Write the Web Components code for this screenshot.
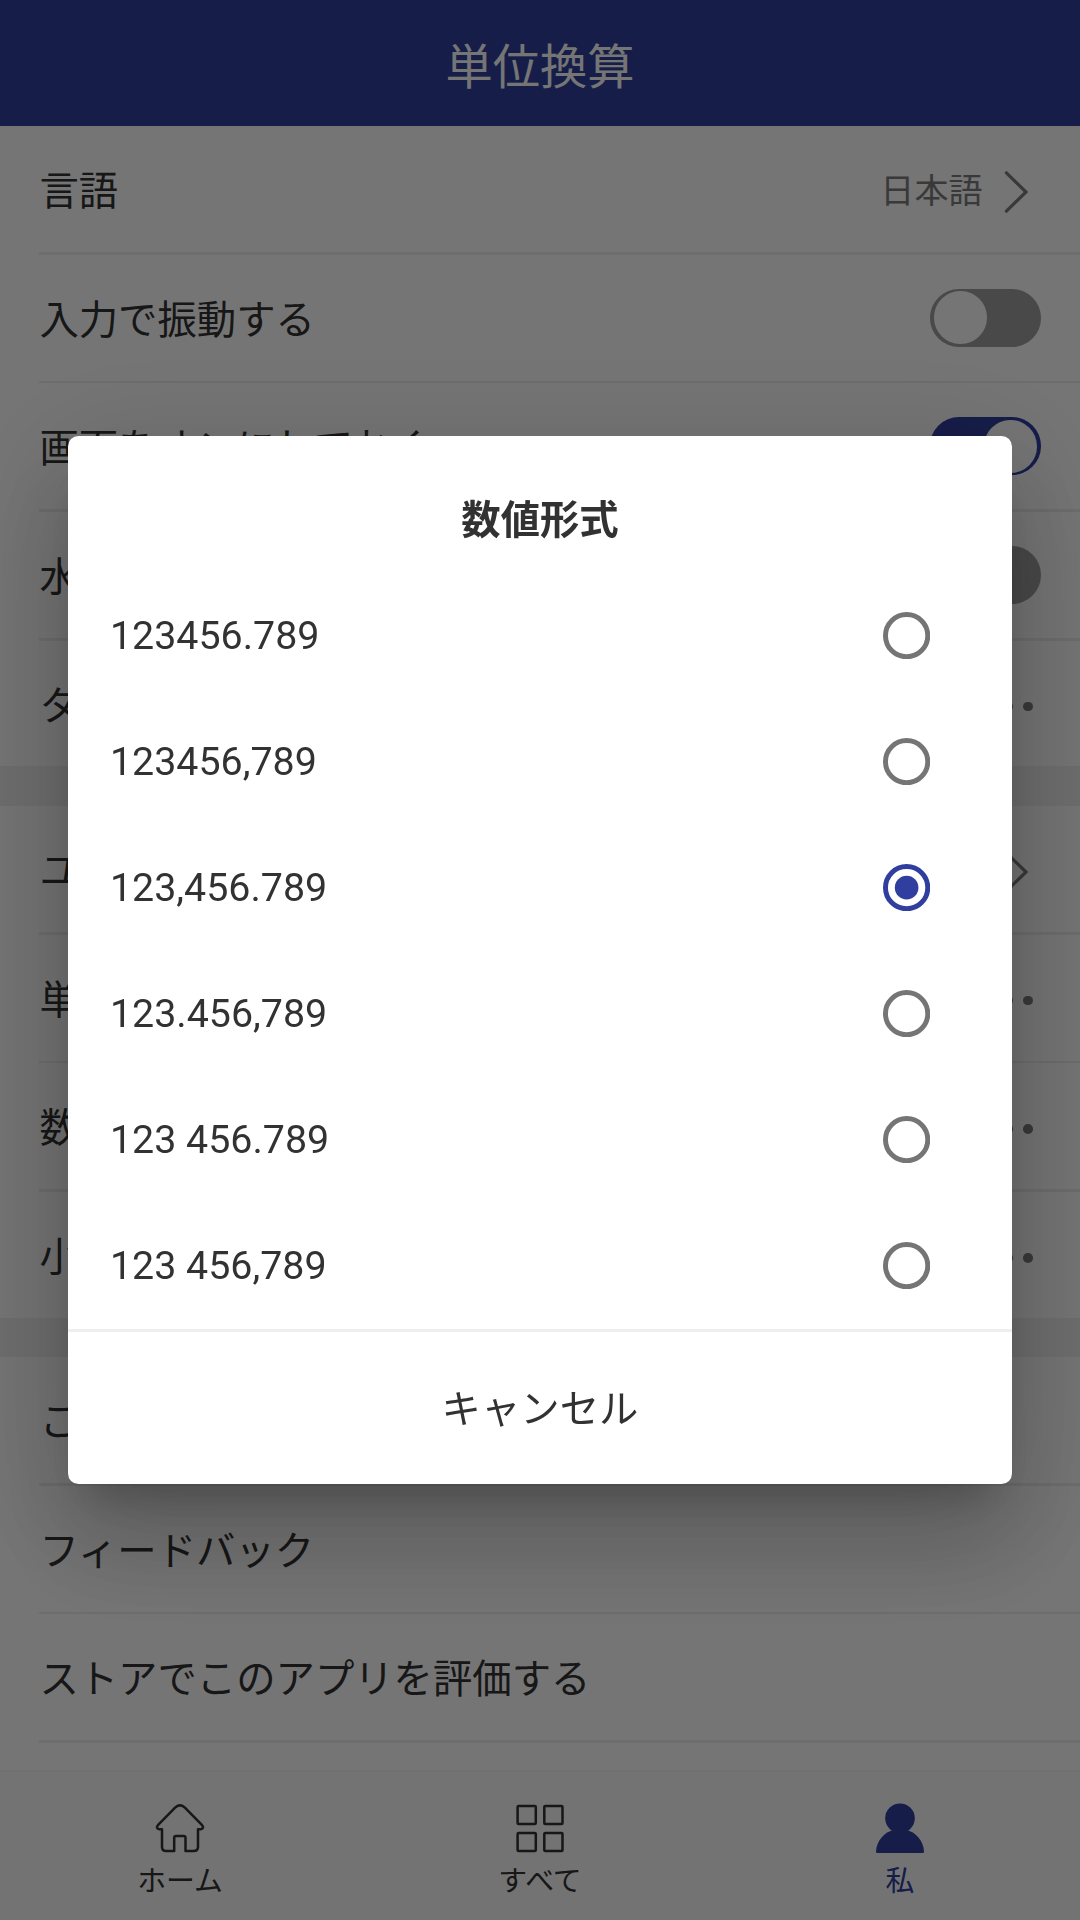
<!DOCTYPE html>
<html lang="ja">
<head>
<meta charset="utf-8">
<title>単位換算</title>
<style>
html, body { margin: 0; height: 100%; }
body {
  --u: 2.625px;
  --primary: #303f9f;
  --text: #323232;
  font-family: Roboto, "Noto Sans CJK JP", sans-serif;
  font-size: calc(var(--u) * 15);
  color: var(--text);
  overflow: hidden;
}
</style>
</head>
<body>
<app-shell>
  <app-header slot="header">単位換算</app-header>
  <settings-group compact>
    <settings-row label="言語"><span>日本語</span><chevron-icon></chevron-icon></settings-row>
    <settings-row label="入力で振動する"><toggle-switch></toggle-switch></settings-row>
    <settings-row label="画面をオンにしておく"><toggle-switch on></toggle-switch></settings-row>
    <settings-row label="水"><toggle-switch></toggle-switch></settings-row>
    <settings-row label="タ" last><more-icon></more-icon></settings-row>
  </settings-group>
  <settings-group>
    <settings-row label="ユ"><chevron-icon></chevron-icon></settings-row>
    <settings-row label="単"><more-icon></more-icon></settings-row>
    <settings-row label="数"><more-icon></more-icon></settings-row>
    <settings-row label="小" last><more-icon></more-icon></settings-row>
  </settings-group>
  <settings-group>
    <settings-row label="こ"></settings-row>
    <settings-row label="フィードバック"></settings-row>
    <settings-row label="ストアでこのアプリを評価する"></settings-row>
  </settings-group>
  <tab-bar slot="footer">
    <tab-item label="ホーム">
      <svg width="50" height="52" viewBox="0 0 50 52" fill="none" stroke="currentColor" stroke-width="2.5" stroke-linejoin="round" stroke-linecap="round"><path d="M20.6 5.2 2.9 23.2C1.2 25.2 2 27.2 4.2 27.2H7V45Q7 49 11 49H19.2V35.8Q19.2 34 21 34H28.7Q30.5 34 30.5 35.8V49H38.5Q43 49 43 45V27.2H45.8C48 27.2 48.8 25.2 47.1 23.2L29.4 5.2Q25 1.6 20.6 5.2Z"/></svg>
    </tab-item>
    <tab-item label="すべて">
      <svg width="50" height="52" viewBox="0 0 50 52" fill="none" stroke="currentColor" stroke-width="2.5"><rect x="2.6" y="4.1" width="18.2" height="18" rx="1"/><rect x="29.3" y="4.1" width="18.2" height="18" rx="1"/><rect x="2.6" y="31" width="18.2" height="18" rx="1"/><rect x="29.3" y="31" width="18.2" height="18" rx="1"/></svg>
    </tab-item>
    <tab-item label="私" active>
      <svg width="50" height="52" viewBox="0 0 50 52" fill="currentColor"><circle cx="25" cy="16.2" r="14.8"/><path d="M2.200 51Q1 51 1 49.500C1.400 39 9.500 29.500 19 28H31C40.500 29.500 48.600 39 49 49.500Q49 51 47.800 51Z"/></svg>
    </tab-item>
  </tab-bar>
</app-shell>
<modal-dialog heading="数値形式" cancel="キャンセル">
  <radio-option>123456.789</radio-option>
  <radio-option>123456,789</radio-option>
  <radio-option checked>123,456.789</radio-option>
  <radio-option>123.456,789</radio-option>
  <radio-option>123 456.789</radio-option>
  <radio-option>123 456,789</radio-option>
</modal-dialog>

<script>
const define = (name, render) => customElements.define(name, class extends HTMLElement {
  constructor() {
    super();
    this.attachShadow({ mode: 'open' });
  }
  connectedCallback() {
    this.shadowRoot.innerHTML = render(this);
  }
});

define('app-shell', () => `
<style>
:host { display: flex; flex-direction: column; height: 100vh; background: #fff; }
main { flex: 1; min-height: 0; overflow: hidden; display: flex; flex-direction: column; gap: calc(var(--u) * 15); background: #f0f0f0; }
::slotted(settings-group:last-of-type) { flex: 1 0 auto; }
</style>
<slot name="header"></slot><main><slot></slot></main><slot name="footer"></slot>`);

define('app-header', () => `
<style>
:host { display: flex; flex: none; align-items: center; justify-content: center; height: calc(var(--u) * 48); box-sizing: border-box; background: var(--primary); color: #fff; font-size: calc(var(--u) * 18); }
</style>
<slot></slot>`);

define('settings-group', () => `
<style>
:host { display: block; flex: none; background: #fff; }
:host([compact]) { height: 640.25px; margin-bottom: .25px; }
</style>
<slot></slot>`);

define('settings-row', el => `
<style>
:host { display: block; }
.row { display: flex; align-items: center; justify-content: space-between; height: calc(var(--u) * 48); padding: 0 calc(var(--u) * 15); }
.label { padding-bottom: 3px; }
.value { display: flex; align-items: center; font-size: calc(var(--u) * 13); color: #7d7d7d; }
::slotted(span) { padding-bottom: 2px; }
.line { height: calc(var(--u) * 1); margin-left: calc(var(--u) * 15); background: #ededed; }
:host([last]) .line { display: none; }
</style>
<div class="row"><div class="label">${el.getAttribute('label')}</div><div class="value"><slot></slot></div></div>
<div class="line"></div>`);

define('chevron-icon', () => `
<style>:host { display: flex; padding: 6px 10.5px 0 21.5px; } svg { display: block; }</style>
<svg width="26" height="44" viewBox="0 0 26 44" fill="none" stroke="currentColor" stroke-width="3.2" stroke-linecap="round"><path d="M2.400 2.800 22 22 2.400 41.200" stroke-linejoin="miter"/></svg>`);

define('more-icon', () => `
<style>:host { display: flex; gap: 10.5px; padding: 6px 8px 0 0; } i { width: 9.5px; height: 9.5px; border-radius: 50%; background: currentColor; }</style>
<i></i><i></i><i></i>`);

define('toggle-switch', () => `
<style>
:host { display: flex; box-sizing: border-box; width: calc(var(--u) * 42); height: calc(var(--u) * 22); padding: calc(var(--u) * 1) 4px; border-radius: calc(var(--u) * 11); background: #a0a0a0; }
i { width: calc(var(--u) * 20); height: calc(var(--u) * 20); border-radius: 50%; background: #fff; }
:host([on]) { background: var(--primary); justify-content: flex-end; }
</style>
<i></i>`);

define('tab-bar', () => `
<style>:host { display: flex; flex: none; box-sizing: border-box; height: calc(var(--u) * 57); border-top: 2px solid #f4f4f4; background: #fafafa; }</style>
<slot></slot>`);

define('tab-item', el => `
<style>
:host { display: flex; flex: 1; flex-direction: column; align-items: center; padding-top: 30px; font-size: calc(var(--u) * 11); line-height: 34px; }
:host([active]) { color: var(--primary); }
.label { margin-top: 10px; }
::slotted(svg) { display: block; }
</style>
<slot></slot><div class="label">${el.getAttribute('label')}</div>`);

define('modal-dialog', el => `
<style>
:host { position: fixed; inset: 0; display: flex; align-items: center; justify-content: center; background: rgba(0, 0, 0, .54); }
.panel { width: 944px; background: #fff; border-radius: calc(var(--u) * 4);
  box-shadow: 0 calc(var(--u) * 11) calc(var(--u) * 15) calc(var(--u) * -7) rgba(0,0,0,.2),
    0 calc(var(--u) * 24) calc(var(--u) * 38) calc(var(--u) * 3) rgba(0,0,0,.14),
    0 calc(var(--u) * 9) calc(var(--u) * 46) calc(var(--u) * 8) rgba(0,0,0,.12); }
.title { box-sizing: border-box; height: calc(var(--u) * 52); padding-top: calc(var(--u) * 20); line-height: calc(var(--u) * 24); text-align: center; font-weight: 700; }
.line { height: 3px; background: #eee; }
.cancel { box-sizing: border-box; height: 152px; padding-bottom: 4px; display: flex; align-items: center; justify-content: center; }
</style>
<div class="panel">
  <div class="title">${el.getAttribute('heading')}</div>
  <div><slot></slot></div>
  <div class="line"></div>
  <div class="cancel">${el.getAttribute('cancel')}</div>
</div>`);

define('radio-option', el => `
<style>
:host { display: flex; align-items: center; justify-content: space-between; height: calc(var(--u) * 48); padding: 0 82px 0 42px; }
svg { display: block; color: #757575; }
:host([checked]) svg { color: var(--primary); }
</style>
<div><slot></slot></div>
<svg width="47.25" height="47.25" viewBox="0 0 20 20"><circle cx="10" cy="10" r="8.95" fill="none" stroke="currentColor" stroke-width="2.1"/>${el.hasAttribute('checked') ? '<circle cx="10" cy="10" r="5" fill="currentColor"/>' : ''}</svg>`);
</script>
</body>
</html>
